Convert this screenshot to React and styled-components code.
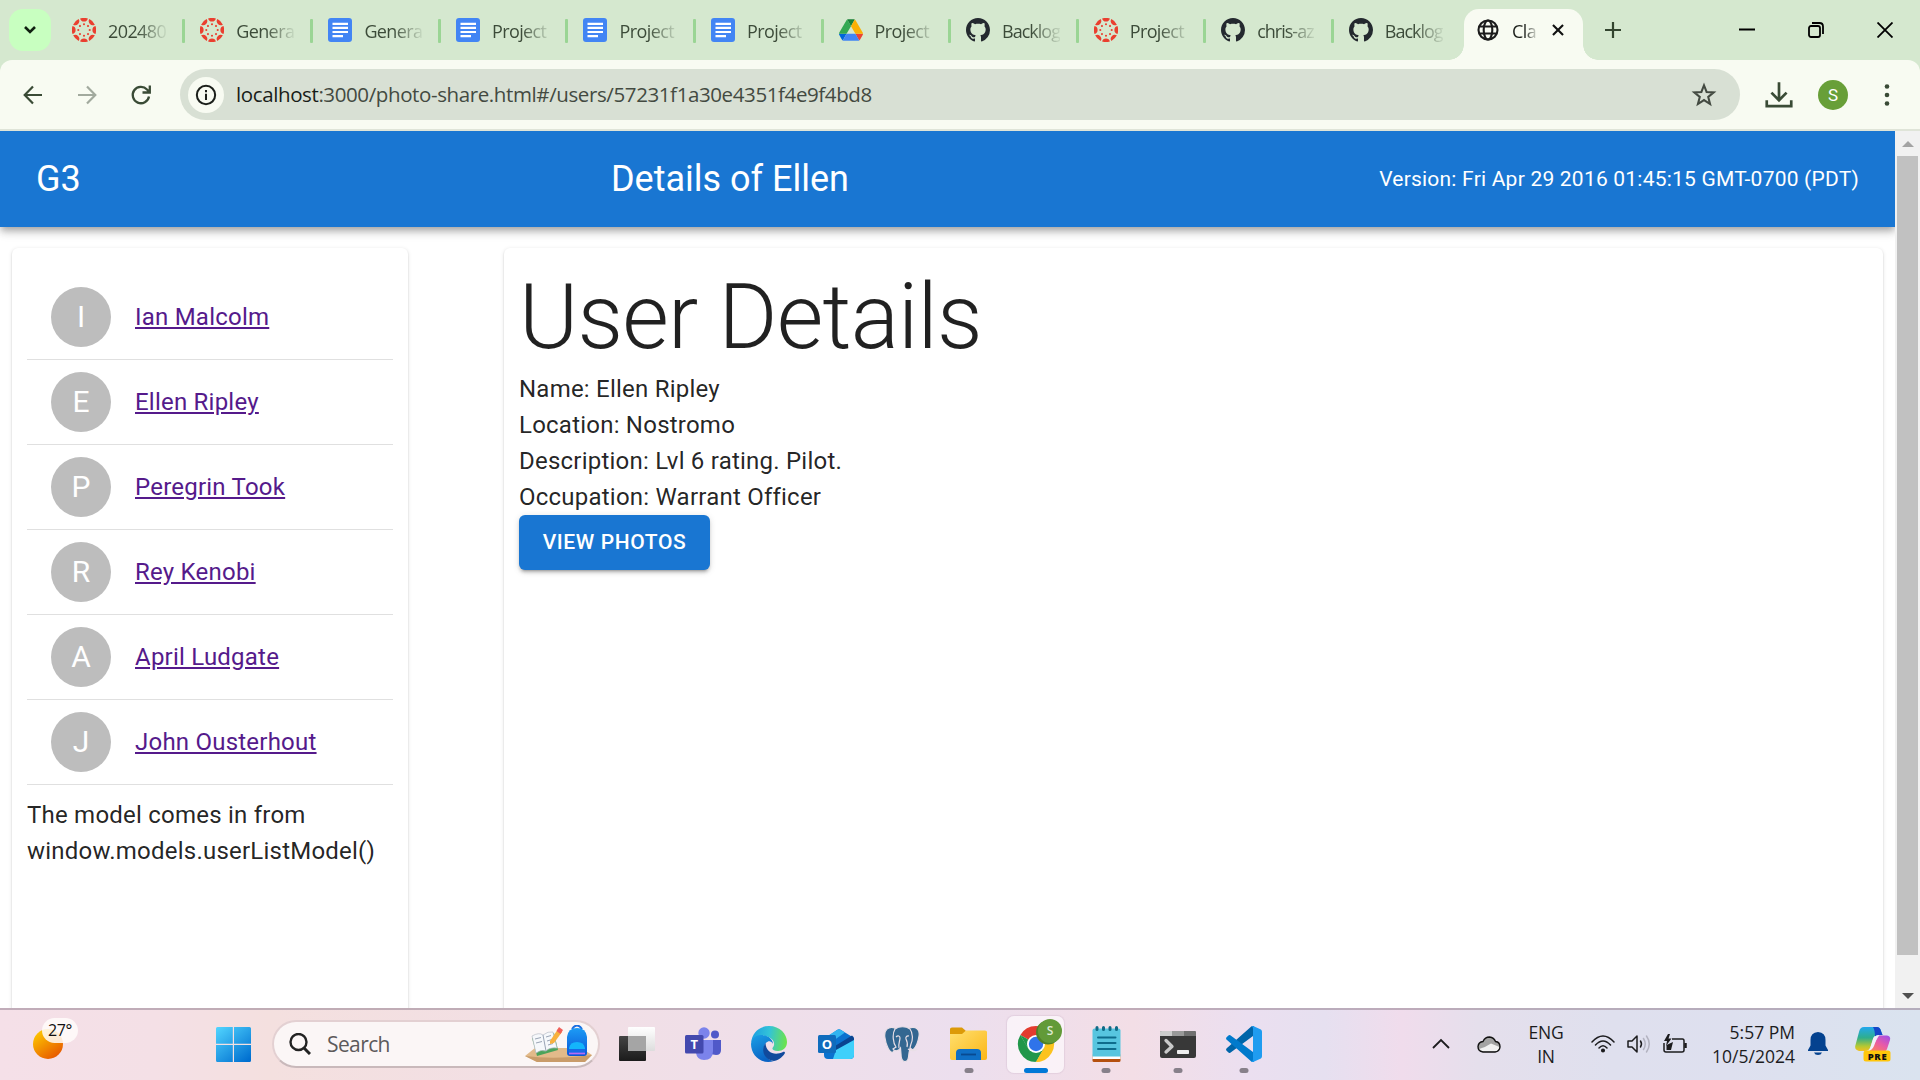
import React from 'react';
import styled, { createGlobalStyle, css } from 'styled-components';

const Global = createGlobalStyle`
  * { box-sizing: border-box; }
  html, body { margin: 0; padding: 0; overflow: hidden; }
  body { font-family: Roboto, sans-serif; }
  svg { display: block; flex: none; }
`;

const uiFont = css`font-family: "Open Sans", "Noto Sans", sans-serif;`;

const Screen = styled.div`
  width: 1920px; height: 1080px; overflow: hidden;
  display: flex; flex-direction: column; background: #fff;
`;

/* ---------- tab strip ---------- */
const TabStrip = styled.div`
  height: 60px; flex: none; background: #d5e8cf; display: flex; align-items: flex-start;
  padding-left: 9px; ${uiFont}
`;
const TabSearch = styled.button`
  width: 42px; height: 42px; margin-top: 9px; margin-right: 6px; flex: none; border: 0; padding: 0; border-radius: 14px;
  background: #c8ffc0; display: flex; align-items: center; justify-content: center;
`;
const Tab = styled.div`
  width: ${p => (p.$wide ? 128.2 : 127.55)}px; height: 60px; flex: none; display: flex; align-items: center;
  padding-left: 15px; color: #3c4b39; font-size: 18px;
`;
const TabLabel = styled.span`
  width: ${p => p.$w || 58}px; height: 30px; line-height: 30px; flex: none; overflow: hidden; white-space: nowrap;
  margin-left: 12px; margin-top: 2px; letter-spacing: ${p => (p.$tight ? -1 : -0.6)}px;
  mask-image: linear-gradient(90deg, #000 50%, transparent 105%);
`;
const Divider = styled.i`
  width: 3px; height: 24px; background: #9ad594; margin-left: auto; margin-top: 2px; border-radius: 1px;
`;
const ActiveTab = styled.div`
  width: 119px; height: 51px; margin: 9px 0 0 2.7px; flex: none; background: #f8fbf2; border-radius: 15px 15px 0 0;
  display: flex; align-items: center; padding: 0 14px 9px 12px; position: relative; font-size: 18px; color: #1b1f1a;
  &::before, &::after { content: ""; position: absolute; bottom: 0; width: 15px; height: 15px; }
  &::before { left: -15px; background: radial-gradient(circle at 0 0, transparent 14.5px, #f8fbf2 15px); }
  &::after { right: -15px; background: radial-gradient(circle at 100% 0, transparent 14.5px, #f8fbf2 15px); }
  svg:last-child { margin-left: auto; }
`;
const NewTab = styled.div`margin: 21px 0 0 21px;`;
const WindowButtons = styled.div`
  margin-left: auto; display: flex; height: 60px; align-items: center; padding-right: 27px; gap: 53px;
`;

/* ---------- toolbar ---------- */
const ToolbarBack = styled.div`background: #d5e8cf; flex: none;`;
const Toolbar = styled.div`
  height: 71px; background: #f8fbf2; border-bottom: 2px solid #dfe4d8; border-radius: 12px 12px 0 0;
  display: flex; align-items: center; padding: 0 21px 0 21px;
`;
const NavIcons = styled.div`display: flex; gap: 30px; width: 159px; flex: none;`;
const Omnibox = styled.div`
  width: 1560px; height: 51px; border-radius: 26px; background: #d8e0d4; flex: none;
  display: flex; align-items: center; padding: 0 23px 0 8px; ${uiFont}
`;
const InfoDot = styled.div`
  width: 36px; height: 36px; border-radius: 50%; background: #f8fbf2;
  display: flex; align-items: center; justify-content: center;
`;
const Url = styled.div`
  flex: 1; margin-left: 12px; margin-bottom: 1px; font-size: 20.5px; color: #434a41; letter-spacing: -0.39px; white-space: nowrap;
  b { font-weight: 400; color: #191d18; }
`;
const Tools = styled.div`display: flex; align-items: center; margin-left: 25px; flex: 1;`;
const ProfileDot = styled.div`
  width: 30px; height: 30px; border-radius: 50%; background: #689f38; color: #fff; font-size: 17px;
  display: flex; align-items: center; justify-content: center; margin: 0 36px 0 25px;
`;

/* ---------- page ---------- */
const Viewport = styled.div`flex: 1; min-height: 0; display: flex;`;
const Page = styled.div`flex: 1; display: flex; flex-direction: column; overflow: hidden; background: #fff;`;
const AppBar = styled.header`
  height: 96px; flex: none; background: #1976d2; color: #fff; padding: 0 36px; z-index: 1;
  display: flex; align-items: center; justify-content: space-between;
  box-shadow: 0 3px 6px -1.5px rgba(0,0,0,.2), 0 6px 7.5px 0 rgba(0,0,0,.14), 0 1.5px 15px 0 rgba(0,0,0,.12);
`;
const BarTitle = styled.div`font-size: 36px; line-height: 48px;`;
const Version = styled.div`font-size: 21px; font-weight: 400; letter-spacing: .215px;`;
const Columns = styled.div`flex: 1; min-height: 0; display: flex; gap: 96px; padding: 21px 12px 0;`;
const Card = styled.section`
  width: ${p => (p.$w ? p.$w + 'px' : 'auto')}; flex: ${p => (p.$w ? 'none' : 1)};
  height: 900px; padding: 15px; border-radius: 6px; background: #fff; color: rgba(0,0,0,.87);
  box-shadow: 0 3px 1.5px -1.5px rgba(0,0,0,.2), 0 1.5px 1.5px 0 rgba(0,0,0,.14), 0 1.5px 4.5px 0 rgba(0,0,0,.12);
`;
const List = styled.ul`list-style: none; margin: 0; padding: 12px 0;`;
const Item = styled.li`
  height: 85px; border-bottom: 1px solid rgba(0,0,0,.12); padding: 0 24px; display: flex; align-items: center; gap: 24px;
`;
const Avatar = styled.div`
  width: 60px; height: 60px; border-radius: 50%; background: #bdbdbd; color: #fff; font-size: 30px; padding-bottom: 2px;
  display: flex; align-items: center; justify-content: center;
`;
const Link = styled.a`color: #551a8b; font-size: 24px; letter-spacing: .225px; text-decoration: underline;`;
const Body = styled.p`margin: 0; font-size: 24px; line-height: 36px; letter-spacing: .225px;`;
const Heading = styled.h1`
  margin: 0; font-size: 90px; line-height: 106px; padding-top: 2px; font-weight: 300; letter-spacing: -0.8px; white-space: nowrap;
`;
const Button = styled.button`
  display: block; width: 191px; height: 55px; border: 0; border-radius: 6px; background: #1976d2; color: #fff; padding: 0 0 2px;
  font: 500 21px/36px Roboto, sans-serif; letter-spacing: .6px; text-transform: uppercase;
  box-shadow: 0 4px 2px -3px rgba(0,0,0,.2), 0 3px 3px 0 rgba(0,0,0,.14), 0 1.5px 7px 0 rgba(0,0,0,.12);
`;
const Scrollbar = styled.div`
  width: 25px; flex: none; background: #f1f1f1; display: flex; flex-direction: column; align-items: center; padding: 10px 0 9px;
`;
const Thumb = styled.div`width: 21px; height: 799px; background: #c1c1c1; margin-top: 9px; margin-bottom: auto;`;

/* ---------- taskbar ---------- */
const Taskbar = styled.footer`
  height: 72px; flex: none; border-top: 2px solid rgba(150,130,145,.55); padding-bottom: 2px; display: flex; align-items: center; ${uiFont}
  background: linear-gradient(90deg, #f5e0e8 0%, #f4e0e6 8%, #f4e0df 14%, #f2dfe4 27%, #efdfea 41%, #ecdfee 50%, #f3dee6 59%, #ebdff0 65%, #e6e0f0 69%, #f0dcec 73%, #e5dfec 77%, #dfe0ee 84%, #dee0ef 90%, #dae3ef 100%) border-box;
`;
const Weather = styled.div`width: 216px; height: 68px; flex: none; padding: 19px 0 0 33px; position: relative;`;
const Temp = styled.span`
  position: absolute; left: 42px; top: 8px; width: 36px; height: 25px; border-radius: 13px; background: rgba(255,252,250,.85);
  font-size: 16px; line-height: 24px; text-align: center; color: #111; letter-spacing: -0.4px;
`;
const SearchBox = styled.div`
  width: 328px; height: 48px; margin: 0 3.5px 0 21px; border-radius: 24px; background: #fbf6f6;
  border: 2px solid #e3d0d2; border-bottom-color: #c9b9bb; flex: none;
  display: flex; align-items: center; padding: 0 5px 0 15px; font-size: 21px; color: #5d5a5b;
  span { margin: 0 auto 0 16px; letter-spacing: -0.6px; }
`;
const AppCell = styled.div`
  width: 66.3px; height: 68px; margin-left: ${p => p.$gap || 0}px; flex: none; position: relative;
  display: flex; align-items: center; justify-content: center;
`;
const Tile = styled.div`
  width: 57px; height: 57px; border-radius: 7px; background: rgba(255,252,255,.65); box-shadow: 0 0 1px 1px rgba(160,130,160,.15);
  display: flex; align-items: center; justify-content: center; flex: none;
`;
const Running = styled.i`
  position: absolute; bottom: 5px; left: 50%; height: 5px; border-radius: 3px; transform: translateX(-50%);
  width: ${p => (p.$on ? 24 : 9)}px; background: ${p => (p.$on ? '#0078d7' : '#87808a')};
`;
const Tray = styled.div`margin-left: auto; display: flex; align-items: center; padding-right: 15px; height: 68px; color: #1c1c1e;`;
const TrayText = styled.div`
  font-size: 17.5px; line-height: 24px; text-align: ${p => p.$align}; width: ${p => p.$w}px; letter-spacing: ${p => p.$ls || 0}px; white-space: nowrap;
`;
const TrayIcon = styled.div`width: ${p => p.$w}px; flex: none; display: flex; justify-content: center;`;

/* ---------- icons ---------- */
const Canvas = () => (
  <svg width="24" height="24" viewBox="0 0 24 24" fill="#ea3f2f">
    {[0, 45, 90, 135, 180, 225, 270, 315].map(a => (
      <g key={a} transform={`rotate(${a} 12 12)`}>
        <path d="M8.100 .5A12.200 12.200 0 0 1 15.900 .5A4 4 0 0 1 8.100 .5z" />
        <circle cx="12" cy="6.300" r="1.050" />
      </g>
    ))}
  </svg>
);
const Docs = () => (
  <svg width="24" height="24" viewBox="0 0 24 24">
    <rect width="24" height="24" rx="3" fill="#4285f4" />
    <path d="M4.500 5.800H20M4.500 9.900H20M4.500 14H20M4.500 18.100H15" stroke="#fff" strokeWidth="2.200" />
  </svg>
);
const Drive = () => (
  <svg width="24" height="24" viewBox="0 0 87.3 78">
    <path d="m6.6 66.85 3.85 6.65c.8 1.4 1.95 2.5 3.3 3.3l13.75-23.8h-27.5c0 1.55.4 3.1 1.2 4.5z" fill="#0066da" />
    <path d="m43.65 25-13.75-23.8c-1.35.8-2.5 1.9-3.3 3.3l-25.4 44a9.06 9.06 0 0 0-1.2 4.5h27.5z" fill="#34a853" />
    <path d="m73.55 76.8c1.35-.8 2.5-1.9 3.3-3.3l1.6-2.75 7.65-13.25c.8-1.4 1.2-2.95 1.2-4.5h-27.5l5.85 11.5z" fill="#ea4335" />
    <path d="m43.65 25 13.75-23.8c-1.35-.8-2.9-1.2-4.5-1.2h-18.5c-1.6 0-3.15.45-4.5 1.2z" fill="#188038" />
    <path d="m59.8 53h-32.3l-13.75 23.8c1.35.8 2.9 1.2 4.5 1.2h50.8c1.6 0 3.15-.45 4.5-1.2z" fill="#4285f4" />
    <path d="m73.4 26.5-12.7-22c-.8-1.4-1.95-2.5-3.3-3.3l-13.75 23.8 16.15 28h27.45c0-1.55-.4-3.1-1.2-4.5z" fill="#fbb004" />
  </svg>
);
const Github = () => (
  <svg width="24" height="24" viewBox="0 0 16 16" fill="#24292f">
    <path d="M8 0C3.58 0 0 3.58 0 8c0 3.54 2.29 6.53 5.47 7.59.4.07.55-.17.55-.38 0-.19-.01-.82-.01-1.49-2.01.37-2.53-.49-2.69-.94-.09-.23-.48-.94-.82-1.13-.28-.15-.68-.52-.01-.53.63-.01 1.08.58 1.23.82.72 1.21 1.87.87 2.33.66.07-.52.28-.87.51-1.07-1.78-.2-3.64-.89-3.64-3.95 0-.87.31-1.59.82-2.15-.08-.2-.36-1.02.08-2.12 0 0 .67-.21 2.2.82.64-.18 1.32-.27 2-.27s1.36.09 2 .27c1.53-1.04 2.2-.82 2.2-.82.44 1.1.16 1.92.08 2.12.51.56.82 1.27.82 2.15 0 3.07-1.87 3.75-3.65 3.95.29.25.54.73.54 1.48 0 1.07-.01 1.93-.01 2.2 0 .21.15.46.55.38A8.01 8.01 0 0 0 16 8c0-4.42-3.58-8-8-8z" />
  </svg>
);
const Line = ({ s = 24, d, c = '#000', w = 2, children, box = 24 }) => (
  <svg width={s} height={s} viewBox={`0 0 ${box} ${box}`} fill="none" stroke={c} strokeWidth={w}>
    {d && <path d={d} />}
    {children}
  </svg>
);
const Sun = () => (
  <svg width="30" height="30" viewBox="0 0 30 30">
    <defs><linearGradient id="sun" x1=".1" y1="0" x2=".8" y2="1"><stop stopColor="#ffd000" /><stop offset="1" stopColor="#e65300" /></linearGradient></defs>
    <circle cx="15" cy="15" r="15" fill="url(#sun)" />
  </svg>
);
const Windows = () => (
  <svg width="35" height="35" viewBox="0 0 35 35" fill="url(#win)">
    <defs><linearGradient id="win" gradientUnits="userSpaceOnUse" x1="2" y1="0" x2="30" y2="35"><stop stopColor="#50d3fe" /><stop offset="1" stopColor="#006fd0" /></linearGradient></defs>
    <path d="M1.5 0H16.8V16.8H0V1.5Q0 0 1.5 0zM18 0H33.500Q35 0 35 1.500V16.800H18zM0 18H16.800V35H1.500Q0 35 0 33.500zM18 18H35V33.500Q35 35 33.500 35H18z" />
  </svg>
);
const School = () => (
  <svg width="68" height="38" viewBox="0 0 68 38">
    <defs>
      <linearGradient id="bag" x1="0" y1="0" x2="0" y2="1"><stop stopColor="#1c9cf5" /><stop offset="1" stopColor="#0b55d8" /></linearGradient>
    </defs>
    <path d="M0 31L10 23H56L67 30L58 37H12z" fill="#e2ba8a" />
    <path d="M0 31Q30 35 67 30L60 37H12z" fill="#c99c6a" />
    <path d="M7 13L29 8L33 25L12 31z" fill="#4aa35a" />
    <path d="M7 11Q14 7 18 10Q23 6 28 7L32 23Q25 22 21 26Q16 24 11 28z" fill="#f6f8fb" stroke="#b7bcc6" strokeWidth=".7" />
    <path d="M18 10L21 26M10 14L16 12.500M11 18L17 16.500M21 12L26 10.500M22 16L27 14.500M23 20L28 18.500" stroke="#9aa4b5" strokeWidth="1" />
    <path d="M25 16L33 4L37 7L29 18L25 19z" fill="#f8b13e" />
    <path d="M31.500 6L34 2L38 5L35.500 9z" fill="#f0605a" />
    <path d="M47 4Q52 -3 57 4" fill="none" stroke="#1b6fe0" strokeWidth="2" />
    <path d="M42 12Q43 3 52 3Q61 3 62 12V28Q62 31 59 31H45Q42 31 42 28z" fill="url(#bag)" />
    <path d="M44 27V23Q45 17 52 17Q59 17 60 23V27z" fill="#14b5fb" />
    <path d="M44 24H60V28H44z" fill="#1769e8" /><path d="M44 28.500H60" stroke="#b76cf2" strokeWidth="1.700" />
  </svg>
);
const TaskView = () => (
  <svg width="36" height="36" viewBox="0 0 36 36">
    <defs>
      <linearGradient id="tv1" x2="0" y2="1"><stop stopColor="#444" /><stop offset="1" stopColor="#1b1b1b" /></linearGradient>
      <linearGradient id="tv2" x2="0" y2="1"><stop stopColor="#fff" /><stop offset="1" stopColor="#ddd" /></linearGradient>
    </defs>
    <rect x="0" y="10" width="27" height="25" rx="1" fill="url(#tv1)" />
    <rect x="9" y="1" width="27" height="24" rx="1" fill="url(#tv2)" />
    <path d="M9 10H27V25H9z" fill="#a5a5a5" />
  </svg>
);
const SvgGlyph = styled.text`font: 700 13px "Open Sans", sans-serif; fill: #fff; text-anchor: middle;`;
const Teams = () => (
  <svg width="36" height="36" viewBox="0 0 36 36">
    <circle cx="30" cy="8.500" r="4" fill="#5059c9" /><circle cx="19" cy="7" r="5.700" fill="#7b83eb" />
    <path d="M26 14H36V24Q36 29 31 29L25 28z" fill="#5059c9" />
    <path d="M11 14H28V25Q28 34 19 34Q12 34 11 27z" fill="#7b83eb" />
    <rect x="0" y="9" width="18.500" height="18.500" rx="1.500" fill="#4349ae" />
    <SvgGlyph x="9.200" y="23">T</SvgGlyph>
  </svg>
);
const Edge = () => (
  <svg width="36" height="36" viewBox="0 0 36 36">
    <defs>
      <linearGradient id="eg1" x1="0" y1=".3" x2="1" y2=".4"><stop stopColor="#1b9de2" /><stop offset=".5" stopColor="#33c3d8" /><stop offset="1" stopColor="#6be34c" /></linearGradient>
      <linearGradient id="eg2" x1="0" y1="0" x2=".4" y2="1"><stop stopColor="#1ba0e6" /><stop offset="1" stopColor="#0a63c4" /></linearGradient>
    </defs>
    <path d="M0 17C1 7 8 0 18 0C29 0 36 8 36 16C36 22 31.500 25 27 25C23 25 21 23.500 21.500 22C25 18 23 12 14 10C8 9 2 12 0 17z" fill="url(#eg1)" />
    <path d="M0 18C1 11 7 8 13 9.500C18 10 22 14 22 18C20 13 14 15 13 21C12 29 18 35 23 35C11 39 0 30 0 18z" fill="url(#eg2)" />
    <path d="M14.500 17C9 25 14 34 23 35C29 34 32 30 34 27C34 26 33 25.500 32 26C24 30 15 27 14.500 17z" fill="#114a9c" />
  </svg>
);
const Outlook = () => (
  <svg width="36" height="36" viewBox="0 0 36 36">
    <path d="M6 13L19 4Q21 2.500 23 4L36 12V29Q36 33 32 33H10Q6 33 6 29z" fill="#0a72cf" />
    <path d="M8 11L19 4Q21 2.500 23 4L27 6.500L12 17z" fill="#31b4f0" />
    <path d="M17 20L34 9.500Q36 10.500 36 13V16L19 27z" fill="#0a4590" />
    <path d="M15 33L18 24L36 14V29Q36 33 32 33z" fill="#3fd0fb" />
    <rect x="0" y="9" width="18" height="18" rx="1.500" fill="#0f6cbd" />
    <SvgGlyph x="9" y="22.800">O</SvgGlyph>
  </svg>
);
const Postgres = () => (
  <svg width="36" height="36" viewBox="0 0 36 36" fill="#336791" stroke="#e9dfe6" strokeWidth="1.200">
    <path d="M11 2C4 0 0 4 .8 11C2 20 6 28 9 26L13 21z" />
    <path d="M25 2C33 0 36 4 35 10C34 17 31 22 29 24L23 20z" />
    <path d="M11 3C15 0 22 0 26 3C29 7 29 14 27 18C26 21 26 23 25 27C24.500 33 24 35.500 21 35.500C18 35.500 17 33 17 28L16.500 22C14 26 10 25 9 23L12 21C9 17 8 8 11 3z" />
    <path d="M24 23C27 25 31 25 33.500 23M12 11C14 9 16 10 16 12C16 15 14 18 15 22M25 10C22.500 9.500 21.500 11 22 13C23.500 16 24 18 23 21" fill="none" />
  </svg>
);
const Folder = () => (
  <svg width="37" height="34" viewBox="0 0 37 34">
    <defs><linearGradient id="fold" x1="0" y1="0" x2="1" y2="1"><stop stopColor="#ffe070" /><stop offset="1" stopColor="#fbb616" /></linearGradient></defs>
    <path d="M0 2Q0 .5 2 .5H12L16 4V9H0z" fill="#dc9a08" />
    <path d="M0 7H12L16 3.500H35Q37 3.500 37 5V31Q37 33 35 33H2Q0 33 0 31z" fill="url(#fold)" />
    <path d="M6 33V26Q6 22 10 22H27Q31 22 31 26V33z" fill="#0f6fc5" />
    <path d="M11 27.500H26" stroke="#084a90" strokeWidth="1.800" />
  </svg>
);
const ChromeSvg = styled.svg`overflow: visible;`;
const ChromeGlyph = styled.text`font: 600 12px "Open Sans", sans-serif; fill: #dfead2; text-anchor: middle;`;
const Chrome = () => (
  <ChromeSvg width="36" height="36" viewBox="4 9 36 36">
    <path d="M6.400 18A18 18 0 0 1 37.600 18L22 27z" fill="#e33b2e" />
    <path d="M6.400 18L14.200 31.500L22 45A18 18 0 0 1 6.400 18z" fill="#21974a" />
    <path d="M22 18H37.600A18 18 0 0 1 22 45L29.800 31.500z" fill="#fcc31e" />
    <path d="M6.400 18L14 31.500L22 27z" fill="#21974a" />
    <path d="M14.200 31.500L29.800 31.500L22 45L17 40z" fill="#21974a" />
    <path d="M22 45L29.800 31.500L33 36L26 44.500z" fill="#fcc31e" />
    <circle cx="22" cy="27" r="9" fill="#fff" /><circle cx="22" cy="27" r="7.200" fill="#2f73ea" />
    <circle cx="34" cy="15.500" r="12" fill="#4f8029" /><circle cx="36" cy="14" r="12" fill="#629a38" />
    <ChromeGlyph x="36" y="18.300">S</ChromeGlyph>
  </ChromeSvg>
);
const Notepad = () => (
  <svg width="29" height="36" viewBox="0 0 29 36">
    <rect x=".5" y="28" width="28" height="8" rx="1.500" fill="#b5500f" /><path d="M.5 29H28.500V33H.5z" fill="#fff" />
    <path d="M.5 4.500Q.5 2.500 2.500 2.500H26.500Q28.500 2.500 28.500 4.500V30.500H.5z" fill="#57c5df" />
    <path d="M5 1.500V3.500M11.500 1.500V3.500M18 1.500V3.500M24.500 1.500V3.500" stroke="#106a86" strokeWidth="3" strokeLinecap="round" />
    <path d="M6 11.500H23.500M6 17H23.500M6 23H23.500" stroke="#0e6c8c" strokeWidth="2" strokeLinecap="round" />
  </svg>
);
const Terminal = () => (
  <svg width="36" height="28" viewBox="0 0 36 28">
    <rect y="1" width="36" height="27" rx="2" fill="#383838" />
    <path d="M0 6V2Q0 1 2 1H12V6z" fill="#ccc" /><path d="M12 1H24V6H12z" fill="#999" /><path d="M24 1H34Q36 1 36 2V6H24z" fill="#707070" />
    <path d="M6 10.500L12 16.500L6 22" fill="none" stroke="#c9c9c9" strokeWidth="3.300" strokeLinecap="round" strokeLinejoin="round" />
    <rect x="17" y="20" width="12" height="4" rx=".8" fill="#eee" />
  </svg>
);
const VsCode = () => (
  <svg width="36" height="36" viewBox="0 0 100 100">
    <path d="M2 62L71 1Q74 -1 78 1L75 28L12 74Q9 76 6 73L1 68Q-1 65 2 62z" fill="#0065a9" />
    <path d="M2 38L71 99Q74 101 78 99L75 72L12 26Q9 24 6 27L1 32Q-1 35 2 38z" fill="#007acc" />
    <path d="M71 99Q75 97 75 93V7Q75 3 71 1Q73 -1 77 1L97 10Q100 12 100 16V84Q100 88 97 90L77 99Q73 101 71 99z" fill="#1f9cf0" />
  </svg>
);
const Cloud = () => (
  <svg width="24" height="17" viewBox="0 0 24 17">
    <path d="M6 16Q1 15.500 1 10.500Q1.500 6 6 5.500Q8 1 12.500 1Q17 1.500 18.500 5.500Q23 6 23 11Q22.500 15.500 18 16z" fill="#a3a3a3" />
    <path d="M6 15.500L2 13Q9 11 14 7.500L22.500 11Q22 15 18 15.500z" fill="#f1f1f1" />
    <path d="M6 16Q1 15.500 1 10.500Q1.500 6 6 5.500Q8 1 12.500 1Q17 1.500 18.500 5.500Q23 6 23 11Q22.500 15.500 18 16z" fill="none" stroke="#111" strokeWidth="1.400" />
  </svg>
);
const Wifi = () => (
  <svg width="24" height="18" viewBox="0 0 24 18" fill="none" stroke="#1c1c1e" strokeWidth="1.500" strokeLinecap="round">
    <path d="M1 7Q12 -5 23 7M4.500 10Q12 2 19.500 10M8 13Q12 8.500 16 13" /><circle cx="12" cy="15.500" r="1.300" fill="#1c1c1e" />
  </svg>
);
const Speaker = () => (
  <svg width="25" height="20" viewBox="0 0 25 20" fill="none" stroke="#1c1c1e" strokeWidth="1.500" strokeLinecap="round" strokeLinejoin="round">
    <path d="M1 7H5L10 2V18L5 13H1zM13.500 7Q15.500 10 13.500 13" />
    <path d="M16.500 4.500Q20 10 16.500 15.500M19.500 2Q25 10 19.500 18" stroke="#b3b3c0" />
  </svg>
);
const Battery = () => (
  <svg width="25" height="20" viewBox="0 0 25 20" fill="none" stroke="#1c1c1e" strokeWidth="1.500">
    <path d="M9 5H19.500Q21 5 21 7V16Q21 18 19 18H3Q1 18 1 16V9" /><path d="M22.500 9V14" strokeWidth="2.500" />
    <path d="M3.500 16V11L10 8L8 16z" fill="#1c1c1e" stroke="none" /><path d="M5 0L1 7H4L3 12L8.500 4.500H5.500L7 0z" fill="#1c1c1e" stroke="none" />
  </svg>
);
const Bell = () => (
  <svg width="20" height="24" viewBox="0 0 20 24" fill="#04428f">
    <path d="M10 0Q17.500 .5 17.500 8V13.500L20 18V19H0V18L2.500 13.500V8Q2.500 .5 10 0zM6 20.500H14Q13 23 10 23Q7 23 6 20.500z" />
  </svg>
);
const PreGlyph = styled.text`font: 800 9.500px "Open Sans", sans-serif; fill: #111; text-anchor: middle; letter-spacing: .6px;`;
const Copilot = () => (
  <svg width="36" height="36" viewBox="0 0 36 36">
    <defs>
      <linearGradient id="cp1" x1="0" y1="0" x2="0" y2="1"><stop stopColor="#22a8ee" /><stop offset=".45" stopColor="#2fae8c" /><stop offset=".8" stopColor="#b5c832" /><stop offset="1" stopColor="#f3c020" /></linearGradient>
      <linearGradient id="cp2" x1="1" y1="0" x2=".2" y2="1"><stop stopColor="#9b4dee" /><stop offset=".5" stopColor="#e85aa8" /><stop offset="1" stopColor="#ff8455" /></linearGradient>
    </defs>
    <path d="M24 9.500H32Q36 10 35 14L32 23Q31 26 27 26H12Q16 25 17.500 21z" fill="url(#cp2)" />
    <path d="M9 1H22Q25 1 26 5L27.500 9H23Q19 9 18 13L15.500 21Q14 25 10 25H4Q-1 24 .5 19L4 6Q5 1 9 1z" fill="url(#cp1)" />
    <path d="M18 1H22Q25 1 26 5L27.500 9H23Q21 9 20 11Q20 4 18 1z" fill="#1546c8" />
    <path d="M18 13Q19 9.500 23 9.500H24.500Q22.500 10 21.500 13L19 20Q17 25 12 25Q15 24 15.500 21z" fill="#f4f0fa" />
    <rect x="8.500" y="24.500" width="27" height="11" rx="2.500" fill="#ffc60a" />
    <PreGlyph x="22.500" y="33.500">PRE</PreGlyph>
  </svg>
);

const tabs = [
  [Canvas, '202480'], [Canvas, 'Genera'], [Docs, 'Genera'], [Docs, 'Project'], [Docs, 'Project'], [Docs, 'Project'],
  [Drive, 'Project'], [Github, 'Backlog'], [Canvas, 'Project'], [Github, 'chris-az'], [Github, 'Backlog'],
];
const users = ['Ian Malcolm', 'Ellen Ripley', 'Peregrin Took', 'Rey Kenobi', 'April Ludgate', 'John Ousterhout'];
const details = ['Name: Ellen Ripley', 'Location: Nostromo', 'Description: Lvl 6 rating. Pilot.', 'Occupation: Warrant Officer'];

export default function App() {
  return (
    <Screen>
      <Global />
      <TabStrip>
        <TabSearch><Line s={24} d="M7 9L12 14L17 9" c="#102010" w={2.600} /></TabSearch>
        {tabs.map(([Icon, label], i) => (
          <Tab key={i} $wide={i < 2}><Icon /><TabLabel $tight={Icon === Github}>{label}</TabLabel>{i < 10 && <Divider />}</Tab>
        ))}
        <ActiveTab>
          <Line s={24} c="#1b1b1b" w={2.100}><circle cx="12" cy="12" r="9.500" /><ellipse cx="12" cy="12" rx="4.300" ry="9.500" /><path d="M3 8.500H21M3 15.500H21" /></Line>
          <TabLabel $w={25}>Cla</TabLabel>
          <Line s={22} d="M6.500 6.500L17.500 17.500M17.500 6.500L6.500 17.500" c="#111" w={2.300} />
        </ActiveTab>
        <NewTab><Line s={18} box={18} d="M9 1V17M1 9H17" c="#33452f" w={2.200} /></NewTab>
        <WindowButtons>
          <Line s={16} box={16} d="M0 7.500H16" w={2} />
          <Line s={16} box={16} w={1.800}><rect x="1" y="4" width="11" height="11" rx="2" /><path d="M4 1H11.500Q15 1 15 4.500V12" /></Line>
          <Line s={16} box={16} d="M.5 .5L15.500 15.500M15.500 .5L.5 15.500" w={1.800} />
        </WindowButtons>
      </TabStrip>
      <ToolbarBack>
        <Toolbar>
          <NavIcons>
            <Line c="#3a4b36" w={2.200} d="M21 12H4M12 3.500L3.700 12L12 20.500" />
            <Line c="#a2aa9e" w={2.200} d="M3 12H20M12 3.500L20.300 12L12 20.500" />
            <Line c="#3a4b36" w={2.300} d="M20 13.500A8.200 8.200 0 1 1 18 6.500L20.500 9M20.800 2.500V9.500H13.500" />
          </NavIcons>
          <Omnibox>
            <InfoDot><Line s={22} c="#1b1f1a" w={2.200}><circle cx="12" cy="12" r="10" /><path d="M12 10.500V17.500M12 6.500V9" /></Line></InfoDot>
            <Url><b>localhost</b>:3000/photo-share.html#/users/57231f1a30e4351f4e9f4bd8</Url>
            <Line s={26} c="#434a41" w={1.900} d="M12 3L14.400 9.200L21 9.600L15.900 13.800L17.600 20.300L12 16.700L6.400 20.300L8.100 13.800L3 9.600L9.600 9.200z" />
          </Omnibox>
          <Tools>
            <Line s={28} c="#3a4b36" w={2.300} d="M12 1V16M5.500 10L12 16.500L18.500 10M1.500 16.500V21.500H22.500V16.500" />
            <ProfileDot>S</ProfileDot>
            <svg width="6" height="24" viewBox="0 0 6 24" fill="#3a4b36"><circle cx="3" cy="3.500" r="2.300" /><circle cx="3" cy="12" r="2.300" /><circle cx="3" cy="20.500" r="2.300" /></svg>
          </Tools>
        </Toolbar>
      </ToolbarBack>
      <Viewport>
        <Page>
          <AppBar><BarTitle>G3</BarTitle><BarTitle>Details of Ellen</BarTitle><Version>Version: Fri Apr 29 2016 01:45:15 GMT-0700 (PDT)</Version></AppBar>
          <Columns>
            <Card $w={396}>
              <List>
                {users.map(u => <Item key={u}><Avatar>{u[0]}</Avatar><Link>{u}</Link></Item>)}
              </List>
              <Body>The model comes in from window.models.userListModel()</Body>
            </Card>
            <Card>
              <Heading>User Details</Heading>
              {details.map(d => <Body key={d}>{d}</Body>)}
              <Button>View Photos</Button>
            </Card>
          </Columns>
        </Page>
        <Scrollbar>
          <svg width="12" height="6" viewBox="0 0 12 6"><path d="M6 0L12 6H0z" fill="#a3a3a3" /></svg>
          <Thumb />
          <svg width="12" height="6" viewBox="0 0 12 6"><path d="M0 0H12L6 6z" fill="#505050" /></svg>
        </Scrollbar>
      </Viewport>
      <Taskbar>
        <Weather><Sun /><Temp>27°</Temp></Weather>
        <Windows />
        <SearchBox>
          <Line s={22} box={22} c="#222" w={2.400}><circle cx="9.500" cy="9" r="8" /><path d="M15 15L21 21" strokeWidth="3" /></Line>
          <span>Search</span>
          <School />
        </SearchBox>
        <AppCell><TaskView /></AppCell>
        <AppCell><Teams /></AppCell>
        <AppCell><Edge /></AppCell>
        <AppCell><Outlook /></AppCell>
        <AppCell><Postgres /></AppCell>
        <AppCell $gap={0.5}><Folder /><Running /></AppCell>
        <AppCell $gap={1}><Tile><Chrome /></Tile><Running $on /></AppCell>
        <AppCell $gap={4}><Notepad /><Running /></AppCell>
        <AppCell $gap={5}><Terminal /><Running /></AppCell>
        <AppCell><VsCode /><Running /></AppCell>
        <Tray>
          <TrayIcon $w={36}><Line s={18} box={18} c="#1c1c1e" w={1.800} d="M1 13L9 5L17 13" /></TrayIcon>
          <TrayIcon $w={60}><Cloud /></TrayIcon>
          <TrayText $w={54} $align="center" $ls={-0.25}>ENG<br />IN</TrayText>
          <TrayIcon $w={60}><Wifi /></TrayIcon>
          <TrayIcon $w={12}><Speaker /></TrayIcon>
          <TrayIcon $w={60}><Battery /></TrayIcon>
          <TrayText $w={90} $align="right">5:57 PM<br />10/5/2024</TrayText>
          <TrayIcon $w={46}><Bell /></TrayIcon>
          <TrayIcon $w={64}><Copilot /></TrayIcon>
        </Tray>
      </Taskbar>
    </Screen>
  );
}
